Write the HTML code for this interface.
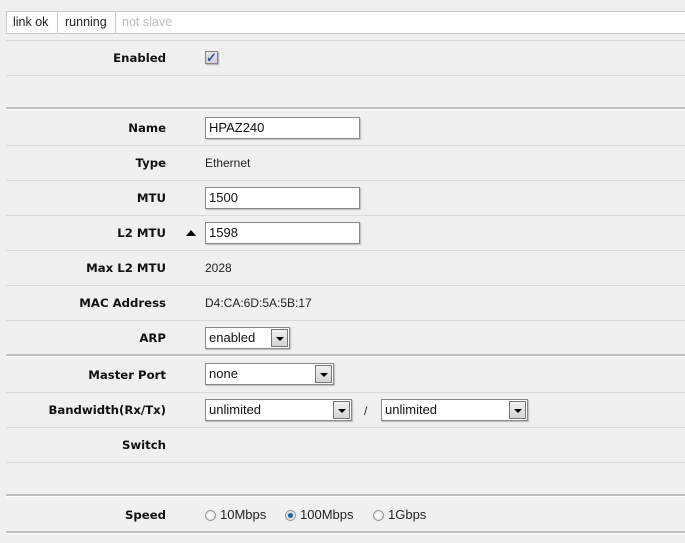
<!DOCTYPE html>
<html><head><meta charset="utf-8"><style>
body{margin:0;width:685px;height:543px;background:#f0f0f0;position:relative;overflow:hidden;font-family:"Liberation Sans",Arial,sans-serif;}
.a{position:absolute}
.hl{position:absolute;left:6px;right:0;height:1px;background:#d9d9d9}
.dl{position:absolute;left:6px;right:0;height:2px;background:#bfbfbf;border-bottom:1px solid #fff}
.lb{position:absolute;right:519px;font:bold 11.7px "DejaVu Sans",Verdana,sans-serif;color:#111;white-space:nowrap;line-height:14px}
.v{position:absolute;left:205px;font-size:12px;color:#222;line-height:14px}
.in{position:absolute;left:205px;height:20px;background:#fff;border:1px solid #888;box-shadow:1px 1px 1px #bbb;font-size:13px;line-height:20px;padding-left:3px;color:#111;box-sizing:content-box}
.sel{position:absolute;height:20px;background:#fff;border:1px solid #888;box-shadow:1px 1px 1px #bbb;font-size:13px;line-height:20px;padding-left:3px;color:#111}
.sel .b{position:absolute;right:1px;top:1px;width:15px;height:16px;border:1px solid #777;background:linear-gradient(#f0f0f0,#d4d4d4)}
.sel .b:after{content:"";position:absolute;left:4px;top:7px;border-left:4px solid transparent;border-right:4px solid transparent;border-top:4px solid #000}
.tab{position:absolute;top:12px;height:21px;line-height:21px;font-size:12.5px;padding:0 6px;border-right:1px solid #ccc;color:#222}
.rd{position:absolute;top:510px;width:11px;height:11px;border-radius:50%;border:1px solid #999;background:radial-gradient(#fff,#ddd);box-sizing:border-box}
</style></head><body>
<div class="a" style="left:6px;top:11px;right:0;height:21px;background:#fff;border-top:1px solid #c8c8c8;border-bottom:1px solid #c8c8c8;border-left:1px solid #c8c8c8"></div>
<div class="tab" style="left:7px;width:38px">link ok</div>
<div class="tab" style="left:59px;width:44px">running</div>
<div class="tab" style="left:116px;color:#bbb;border:none">not slave</div>

<div class="hl" style="top:40px"></div>
<div class="lb" style="top:51px">Enabled</div>
<div class="a" style="left:205px;top:51px;width:11px;height:11px;border:1px solid #888;background:linear-gradient(#e6e6e6,#cfcfd8);box-shadow:1px 1px 1px #aaa;font-size:13px;line-height:12px;color:#3a52a0;text-align:center;font-weight:bold">✓</div>
<div class="hl" style="top:75px"></div>
<div class="dl" style="top:107px"></div>

<div class="lb" style="top:121px">Name</div>
<div class="in" style="top:117px;width:150px">HPAZ240</div>
<div class="hl" style="top:145px"></div>
<div class="lb" style="top:156px">Type</div>
<div class="v" style="top:156px">Ethernet</div>
<div class="hl" style="top:180px"></div>
<div class="lb" style="top:191px">MTU</div>
<div class="in" style="top:187px;width:150px">1500</div>
<div class="hl" style="top:215px"></div>
<div class="lb" style="top:226px">L2 MTU</div>
<div class="a" style="left:186px;top:230px;border-left:5px solid transparent;border-right:5px solid transparent;border-bottom:6px solid #000"></div>
<div class="in" style="top:222px;width:150px">1598</div>
<div class="hl" style="top:250px"></div>
<div class="lb" style="top:261px">Max L2 MTU</div>
<div class="v" style="top:261px">2028</div>
<div class="hl" style="top:285px"></div>
<div class="lb" style="top:296px">MAC Address</div>
<div class="v" style="top:296px">D4:CA:6D:5A:5B:17</div>
<div class="hl" style="top:320px"></div>
<div class="lb" style="top:331px">ARP</div>
<div class="sel" style="left:205px;top:327px;width:80px">enabled<div class="b"></div></div>
<div class="dl" style="top:354px"></div>

<div class="lb" style="top:368px">Master Port</div>
<div class="sel" style="left:205px;top:363px;width:124px">none<div class="b"></div></div>
<div class="hl" style="top:392px"></div>
<div class="lb" style="top:403px">Bandwidth(Rx/Tx)</div>
<div class="sel" style="left:205px;top:399px;width:142px">unlimited<div class="b"></div></div>
<div class="v" style="left:364px;top:404px">/</div>
<div class="sel" style="left:381px;top:399px;width:142px">unlimited<div class="b"></div></div>
<div class="hl" style="top:427px"></div>
<div class="lb" style="top:438px">Switch</div>
<div class="hl" style="top:462px"></div>
<div class="dl" style="top:494px"></div>

<div class="lb" style="top:508px">Speed</div>
<div class="rd" style="left:205px"></div>
<div class="v" style="left:220px;top:508px;font-size:13px">10Mbps</div>
<div class="rd" style="left:285px;background:radial-gradient(#1a6aa8 0,#1a6aa8 35%,#ddd 45%,#fff)"></div>
<div class="v" style="left:300px;top:508px;font-size:13px">100Mbps</div>
<div class="rd" style="left:373px"></div>
<div class="v" style="left:388px;top:508px;font-size:13px">1Gbps</div>
<div class="dl" style="top:531px"></div>
</body></html>
